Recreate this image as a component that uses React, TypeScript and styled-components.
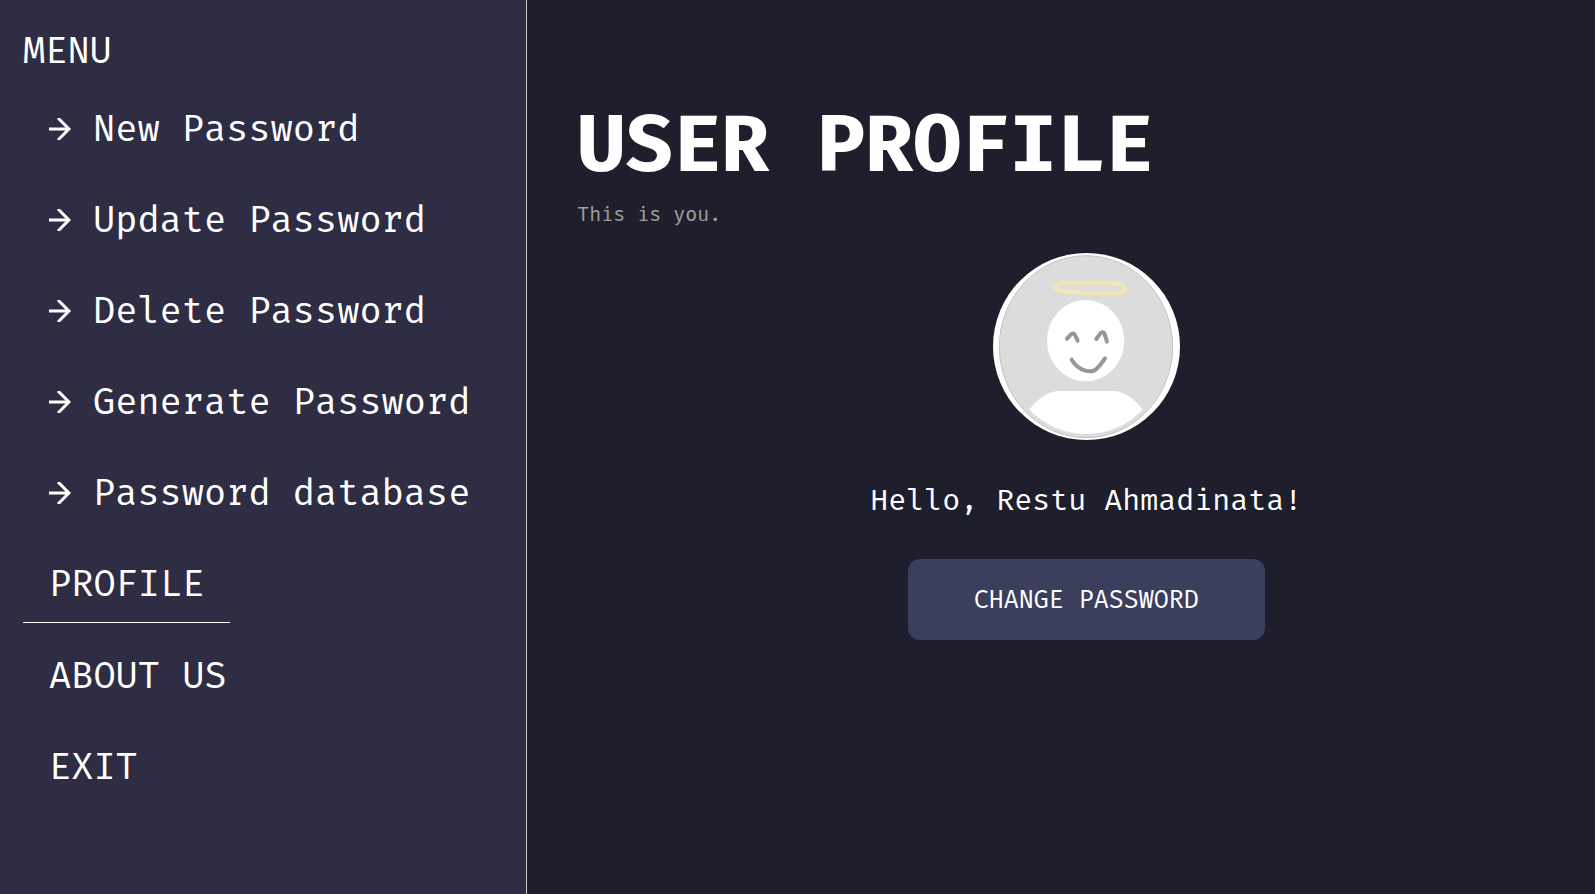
import React from "react";
import styled, { createGlobalStyle } from "styled-components";

const GlobalStyle = createGlobalStyle`
  *, *::before, *::after { box-sizing: border-box; }
  body {
    margin: 0;
    background: #1f1e2c;
    color: #fff;
    font-family: "Fira Mono", "Fira Code", "DejaVu Sans Mono", monospace;
  }
`;

const Page = styled.div`
  display: flex;
  min-height: 100vh;
`;

const Sidebar = styled.nav`
  flex: none;
  box-sizing: content-box;
  width: 33%;
  border-right: 1px solid #c9c9c9;
  background: #2e2d44;
  font-size: 37px;
  line-height: 43px;
`;

const MenuTitle = styled.p`
  margin: 0;
  padding: 29px 23px 18px;
`;

const MenuList = styled.ul`
  display: flex;
  flex-direction: column;
  align-items: flex-start;
  gap: 14px;
  margin: 0;
  padding: 0 0 0 23px;
  list-style: none;
`;

const MenuLink = styled.a<{ $active?: boolean }>`
  display: flex;
  align-items: center;
  gap: 22px;
  padding: 17px 26px;
  border-bottom: ${(p) => (p.$active ? "1px solid #fff" : "none")};
  color: inherit;
  text-decoration: none;
  white-space: nowrap;
`;

const Arrow = styled.svg`
  flex: none;
  width: 22px;
  height: 22px;
`;

const Main = styled.main`
  flex: 1;
  min-width: 0;
  padding: 104px 0 50px 50px;
`;

const Title = styled.h1`
  margin: 0;
  font-size: 80px;
  line-height: 80px;
  font-weight: 700;
`;

const Subtitle = styled.p`
  margin: 18px 0 27px;
  color: #a09f9f;
  font-size: 20px;
  line-height: 24px;
`;

const Profile = styled.section`
  display: flex;
  flex-direction: column;
  align-items: center;
`;

const Avatar = styled.svg`
  width: 187px;
  height: 187px;
`;

const Greeting = styled.p`
  margin: 42px 0 41px;
  font-size: 30px;
  line-height: 36px;
`;

const ChangeButton = styled.button`
  padding: 26px 66px 24px;
  border: 0;
  border-radius: 12px;
  background: #3b3e5c;
  color: #fff;
  font-family: inherit;
  font-size: 25px;
  line-height: 31px;
  cursor: pointer;
`;

const items = [
  { label: "New Password", arrow: true },
  { label: "Update Password", arrow: true },
  { label: "Delete Password", arrow: true },
  { label: "Generate Password", arrow: true },
  { label: "Password database", arrow: true },
  { label: "PROFILE", active: true },
  { label: "ABOUT US" },
  { label: "EXIT" },
];

export default function App() {
  return (
    <>
      <GlobalStyle />
      <Page>
        <Sidebar>
          <MenuTitle>MENU</MenuTitle>
          <MenuList>
            {items.map((item) => (
              <li key={item.label}>
                <MenuLink href="#" $active={item.active} aria-current={item.active ? "page" : undefined}>
                  {item.arrow && (
                    <Arrow viewBox="0 0 22 22" fill="none" stroke="#fff" strokeWidth="3" aria-hidden="true">
                      <path d="M0 11H20" />
                      <path d="M9 0L20 11L9 22" />
                    </Arrow>
                  )}
                  {item.label}
                </MenuLink>
              </li>
            ))}
          </MenuList>
        </Sidebar>
        <Main>
          <Title>USER PROFILE</Title>
          <Subtitle>This is you.</Subtitle>
          <Profile>
            <Avatar viewBox="39 39 561 561" role="img" aria-label="Profile picture" fill="none" strokeLinecap="round" strokeLinejoin="round">
              <circle cx="319.5" cy="319.5" r="280.5" fill="#fff" />
              <ellipse cx="318" cy="320" rx="260" ry="273" fill="#dcdcdc" stroke="#c3c3c3" strokeWidth="3" />
              <path
                d="M311 128C350 130 390 126 415 131Q434 137 434 147Q431 160 413 159L310 158L252 154Q224 150 223 143Q228 130 255 130Q285 130 311 128Z"
                stroke="#f2e7b0"
                strokeWidth="12"
              />
              <ellipse cx="317" cy="302" rx="116" ry="122" fill="#fff" />
              <path d="M147 509Q184 460 230 453H405Q452 460 488 509Q415 582 318 582Q224 582 147 509Z" fill="#fff" />
              <g stroke="#969696" strokeWidth="12">
                <path d="M261 296L274 282Q281 279 285 285L293 302" />
                <path d="M349 297L361 280Q370 274 373 280L381 305" />
                <path d="M275 359Q290 384 316 392Q339 397 349 387Q361 376 375 355" />
              </g>
            </Avatar>
            <Greeting>Hello, Restu Ahmadinata!</Greeting>
            <ChangeButton type="button">CHANGE PASSWORD</ChangeButton>
          </Profile>
        </Main>
      </Page>
    </>
  );
}
